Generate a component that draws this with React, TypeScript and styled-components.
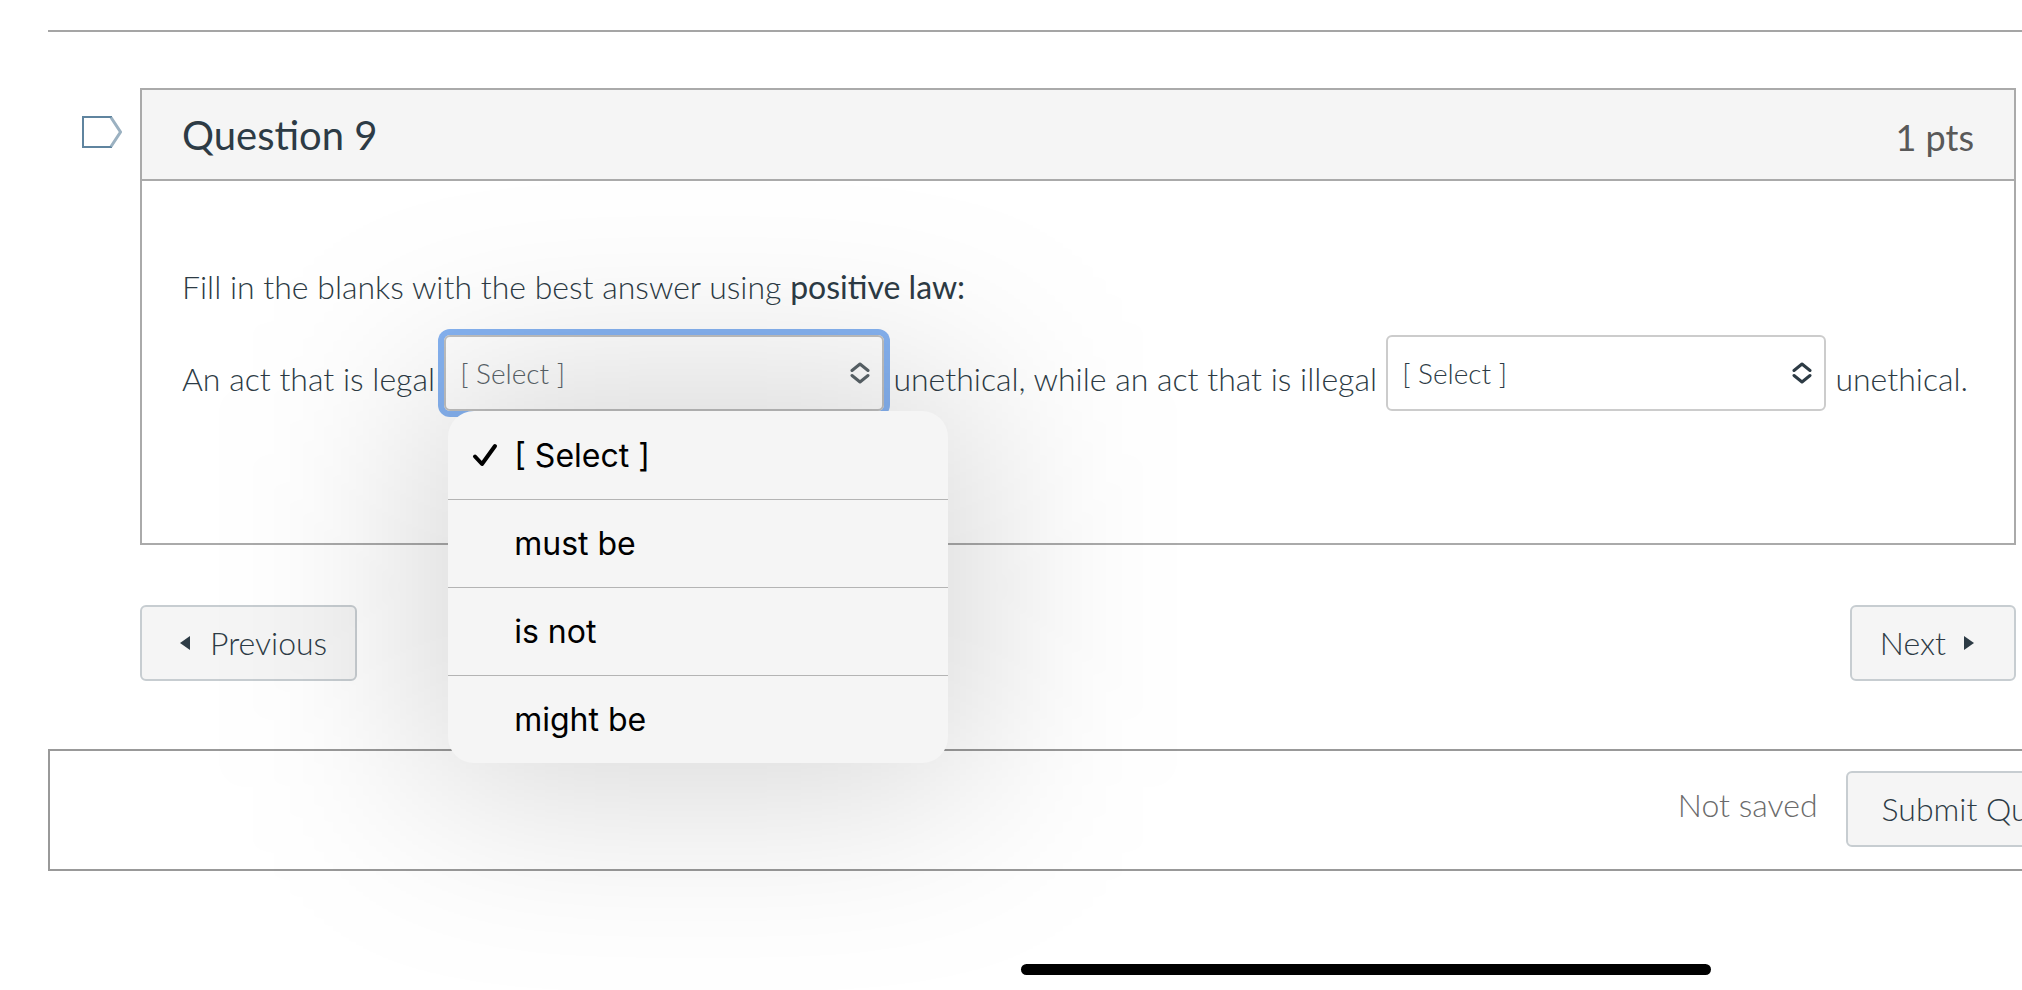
import React, { useState } from "react";
import styled, { createGlobalStyle, css } from "styled-components";

const GlobalStyle = createGlobalStyle`
  *, *::before, *::after { box-sizing: border-box; }
  body {
    margin: 0;
    background: #fff;
    color: #2d3b45;
    font-family: Lato, "Liberation Sans", sans-serif;
    font-size: 32px;
    font-weight: 300;
    line-height: 48px;
    overflow-x: hidden;
  }
`;

const Page = styled.div`
  position: relative;
  min-height: 100vh;
  padding: 30px 0 0 48px;
  overflow: hidden;
`;

const Divider = styled.hr`
  height: 2px;
  margin: 0 0 56px;
  border: 0;
  background: #a5a5a5;
`;

const QuestionRow = styled.div`
  display: flex;
  align-items: flex-start;
`;

const FlagButton = styled.button`
  display: flex;
  flex: none;
  width: 92px;
  margin: 0;
  padding: 28px 0 0 34px;
  border: 0;
  background: none;
`;

const QuestionColumn = styled.main`
  flex: 1;
  min-width: 0;
  margin-right: 6px;
`;

const QuestionCard = styled.section`
  border: 2px solid #aaa;
`;

const QuestionHeader = styled.header`
  display: flex;
  align-items: center;
  justify-content: space-between;
  height: 91px;
  padding: 0 40px;
  border-bottom: 2px solid #aaa;
  background: #f5f5f5;
`;

const QuestionTitle = styled.h1`
  margin: 0;
  font-size: 40px;
  font-weight: 400;
`;

const Points = styled.span`
  padding-top: 4px;
  color: #595959;
  font-size: 36px;
  font-weight: 400;
`;

const QuestionBody = styled.div`
  padding: 82px 46px 132px 40px;
`;

const Prompt = styled.p`
  margin: 0 0 24px;
  strong { font-weight: 400; }
`;

const Sentence = styled.p`
  display: flex;
  align-items: flex-start;
  justify-content: space-between;
  margin: 0;
  white-space: nowrap;
`;

const SentenceText = styled.span`
  padding-top: 20px;
`;

const SelectBox = styled.span<{ $active?: boolean }>`
  position: relative;
  display: grid;
  align-items: center;
  flex: 0 1 440px;
  min-width: 200px;
  border-radius: 6px;
  color: #2d3b45;
  ${(p) => p.$active && css`
    color: #5a6469;
    box-shadow: 0 0 0 6px #86b3f2;
  `}
  > select, > svg { grid-area: 1 / 1; }
  > svg { justify-self: end; margin-right: 14px; pointer-events: none; }
`;

const Select = styled.select<{ $active?: boolean }>`
  appearance: none;
  width: 100%;
  height: 76px;
  padding: 0 48px 0 14px;
  border: 2px solid ${(p) => (p.$active ? "#c0c0c0" : "#ccc")};
  border-radius: 6px;
  outline: none;
  background: #fff;
  color: inherit;
  font: inherit;
  font-size: 28px;
`;

const Popup = styled.span`
  position: absolute;
  z-index: 2;
  top: 76px;
  left: 4px;
  width: 500px;
  &::before {
    content: "";
    position: absolute;
    inset: -24px;
    border-radius: 26px;
    background: rgba(0, 0, 0, 0.17);
    filter: blur(100px);
    pointer-events: none;
  }
`;

const Menu = styled.span`
  position: relative;
  display: flex;
  flex-direction: column;
  border-radius: 26px;
  background: #f5f5f5;
`;

const MenuItem = styled.button`
  display: flex;
  align-items: center;
  height: 88px;
  margin: 0;
  padding: 0 0 0 24px;
  border: 0;
  background: none;
  color: #000;
  font-family: Inter, "Liberation Sans", sans-serif;
  font-size: 32px;
  text-align: left;
  & + & { border-top: 1px solid #b4b4b4; }
`;

const CheckSlot = styled.span`
  display: flex;
  width: 42px;
`;

const NavRow = styled.nav`
  display: flex;
  justify-content: space-between;
  margin-top: 60px;
`;

const Button = styled.button`
  display: flex;
  align-items: center;
  height: 76px;
  margin: 0;
  padding: 0 34px;
  border: 2px solid #c7cdd1;
  border-radius: 6px;
  background: #f5f5f5;
  color: #2d3b45;
  font: inherit;
  white-space: nowrap;
`;

const PreviousButton = styled(Button)`
  gap: 20px;
  padding: 0 28px 0 38px;
`;

const NextButton = styled(Button)`
  gap: 18px;
  padding: 0 40px 0 28px;
`;

const SubmitBar = styled.footer`
  display: flex;
  align-items: center;
  justify-content: flex-end;
  gap: 28px;
  margin: 68px -80px 0 0;
  padding: 20px 14px 22px;
  border: 2px solid #999;
`;

const SaveStatus = styled.span`
  padding-bottom: 8px;
  color: #6b6b6b;
`;

const HomeIndicator = styled.div`
  position: absolute;
  bottom: 15px;
  left: 50%;
  width: 690px;
  height: 11px;
  margin-left: 10px;
  border-radius: 6px;
  background: #000;
`;

const Chevrons = () => (
  <svg width="20" height="22" viewBox="0 0 20 22" fill="none" stroke="currentColor" strokeWidth="3" strokeLinecap="round" strokeLinejoin="round" aria-hidden="true">
    <path d="M2 8.5L10 2L18 8.5M2 13.5L10 20L18 13.5" />
  </svg>
);

const Caret = ({ left }: { left?: boolean }) => (
  <svg width="10" height="14" viewBox="0 0 10 14" fill="currentColor" aria-hidden="true">
    <path d={left ? "M10 0V14L0 7Z" : "M0 0V14L10 7Z"} />
  </svg>
);

const Check = () => (
  <svg width="26" height="24" viewBox="0 0 26 24" fill="none" stroke="currentColor" strokeWidth="4" strokeLinecap="round" strokeLinejoin="round" aria-hidden="true">
    <path d="M3 13.5L10 21L23 3" />
  </svg>
);

const OPTIONS = ["[ Select ]", "must be", "is not", "might be"];

type BlankProps = {
  label: string;
  value: string;
  open?: boolean;
  onChange: (value: string) => void;
};

const Blank = ({ label, value, open, onChange }: BlankProps) => (
  <SelectBox $active={open}>
    <Select $active={open} aria-label={label} value={value} onChange={(e) => onChange(e.target.value)}>
      {OPTIONS.map((o) => <option key={o}>{o}</option>)}
    </Select>
    <Chevrons />
    {open && (
      <Popup>
        <Menu role="listbox" aria-label={label}>
          {OPTIONS.map((o) => (
            <MenuItem key={o} type="button" role="option" aria-selected={o === value} onClick={() => onChange(o)}>
              <CheckSlot>{o === value && <Check />}</CheckSlot>
              {o}
            </MenuItem>
          ))}
        </Menu>
      </Popup>
    )}
  </SelectBox>
);

export default function App() {
  const [first, setFirst] = useState(OPTIONS[0]);
  const [second, setSecond] = useState(OPTIONS[0]);
  return (
    <>
      <GlobalStyle />
      <Page>
        <Divider />
        <QuestionRow>
          <FlagButton type="button" aria-label="Flag question">
            <svg width="40" height="32" viewBox="0 0 40 32" fill="none" aria-hidden="true">
              <path d="M30 1H1V31H30" stroke="#5f849f" strokeWidth="2" />
              <path d="M29 1.5L38.5 16L29 30.5" stroke="#9bb1c1" strokeWidth="3" />
            </svg>
          </FlagButton>
          <QuestionColumn>
            <QuestionCard>
              <QuestionHeader>
                <QuestionTitle>Question 9</QuestionTitle>
                <Points>1 pts</Points>
              </QuestionHeader>
              <QuestionBody>
                <Prompt>
                  Fill in the blanks with the best answer using <strong>positive law:</strong>
                </Prompt>
                <Sentence>
                  <SentenceText>An act that is legal</SentenceText>
                  <Blank label="First blank" value={first} onChange={setFirst} open />
                  <SentenceText>unethical, while an act that is illegal</SentenceText>
                  <Blank label="Second blank" value={second} onChange={setSecond} />
                  <SentenceText>unethical.</SentenceText>
                </Sentence>
              </QuestionBody>
            </QuestionCard>
            <NavRow>
              <PreviousButton type="button"><Caret left />Previous</PreviousButton>
              <NextButton type="button">Next<Caret /></NextButton>
            </NavRow>
          </QuestionColumn>
        </QuestionRow>
        <SubmitBar>
          <SaveStatus>Not saved</SaveStatus>
          <Button type="button">Submit Quiz</Button>
        </SubmitBar>
        <HomeIndicator />
      </Page>
    </>
  );
}
